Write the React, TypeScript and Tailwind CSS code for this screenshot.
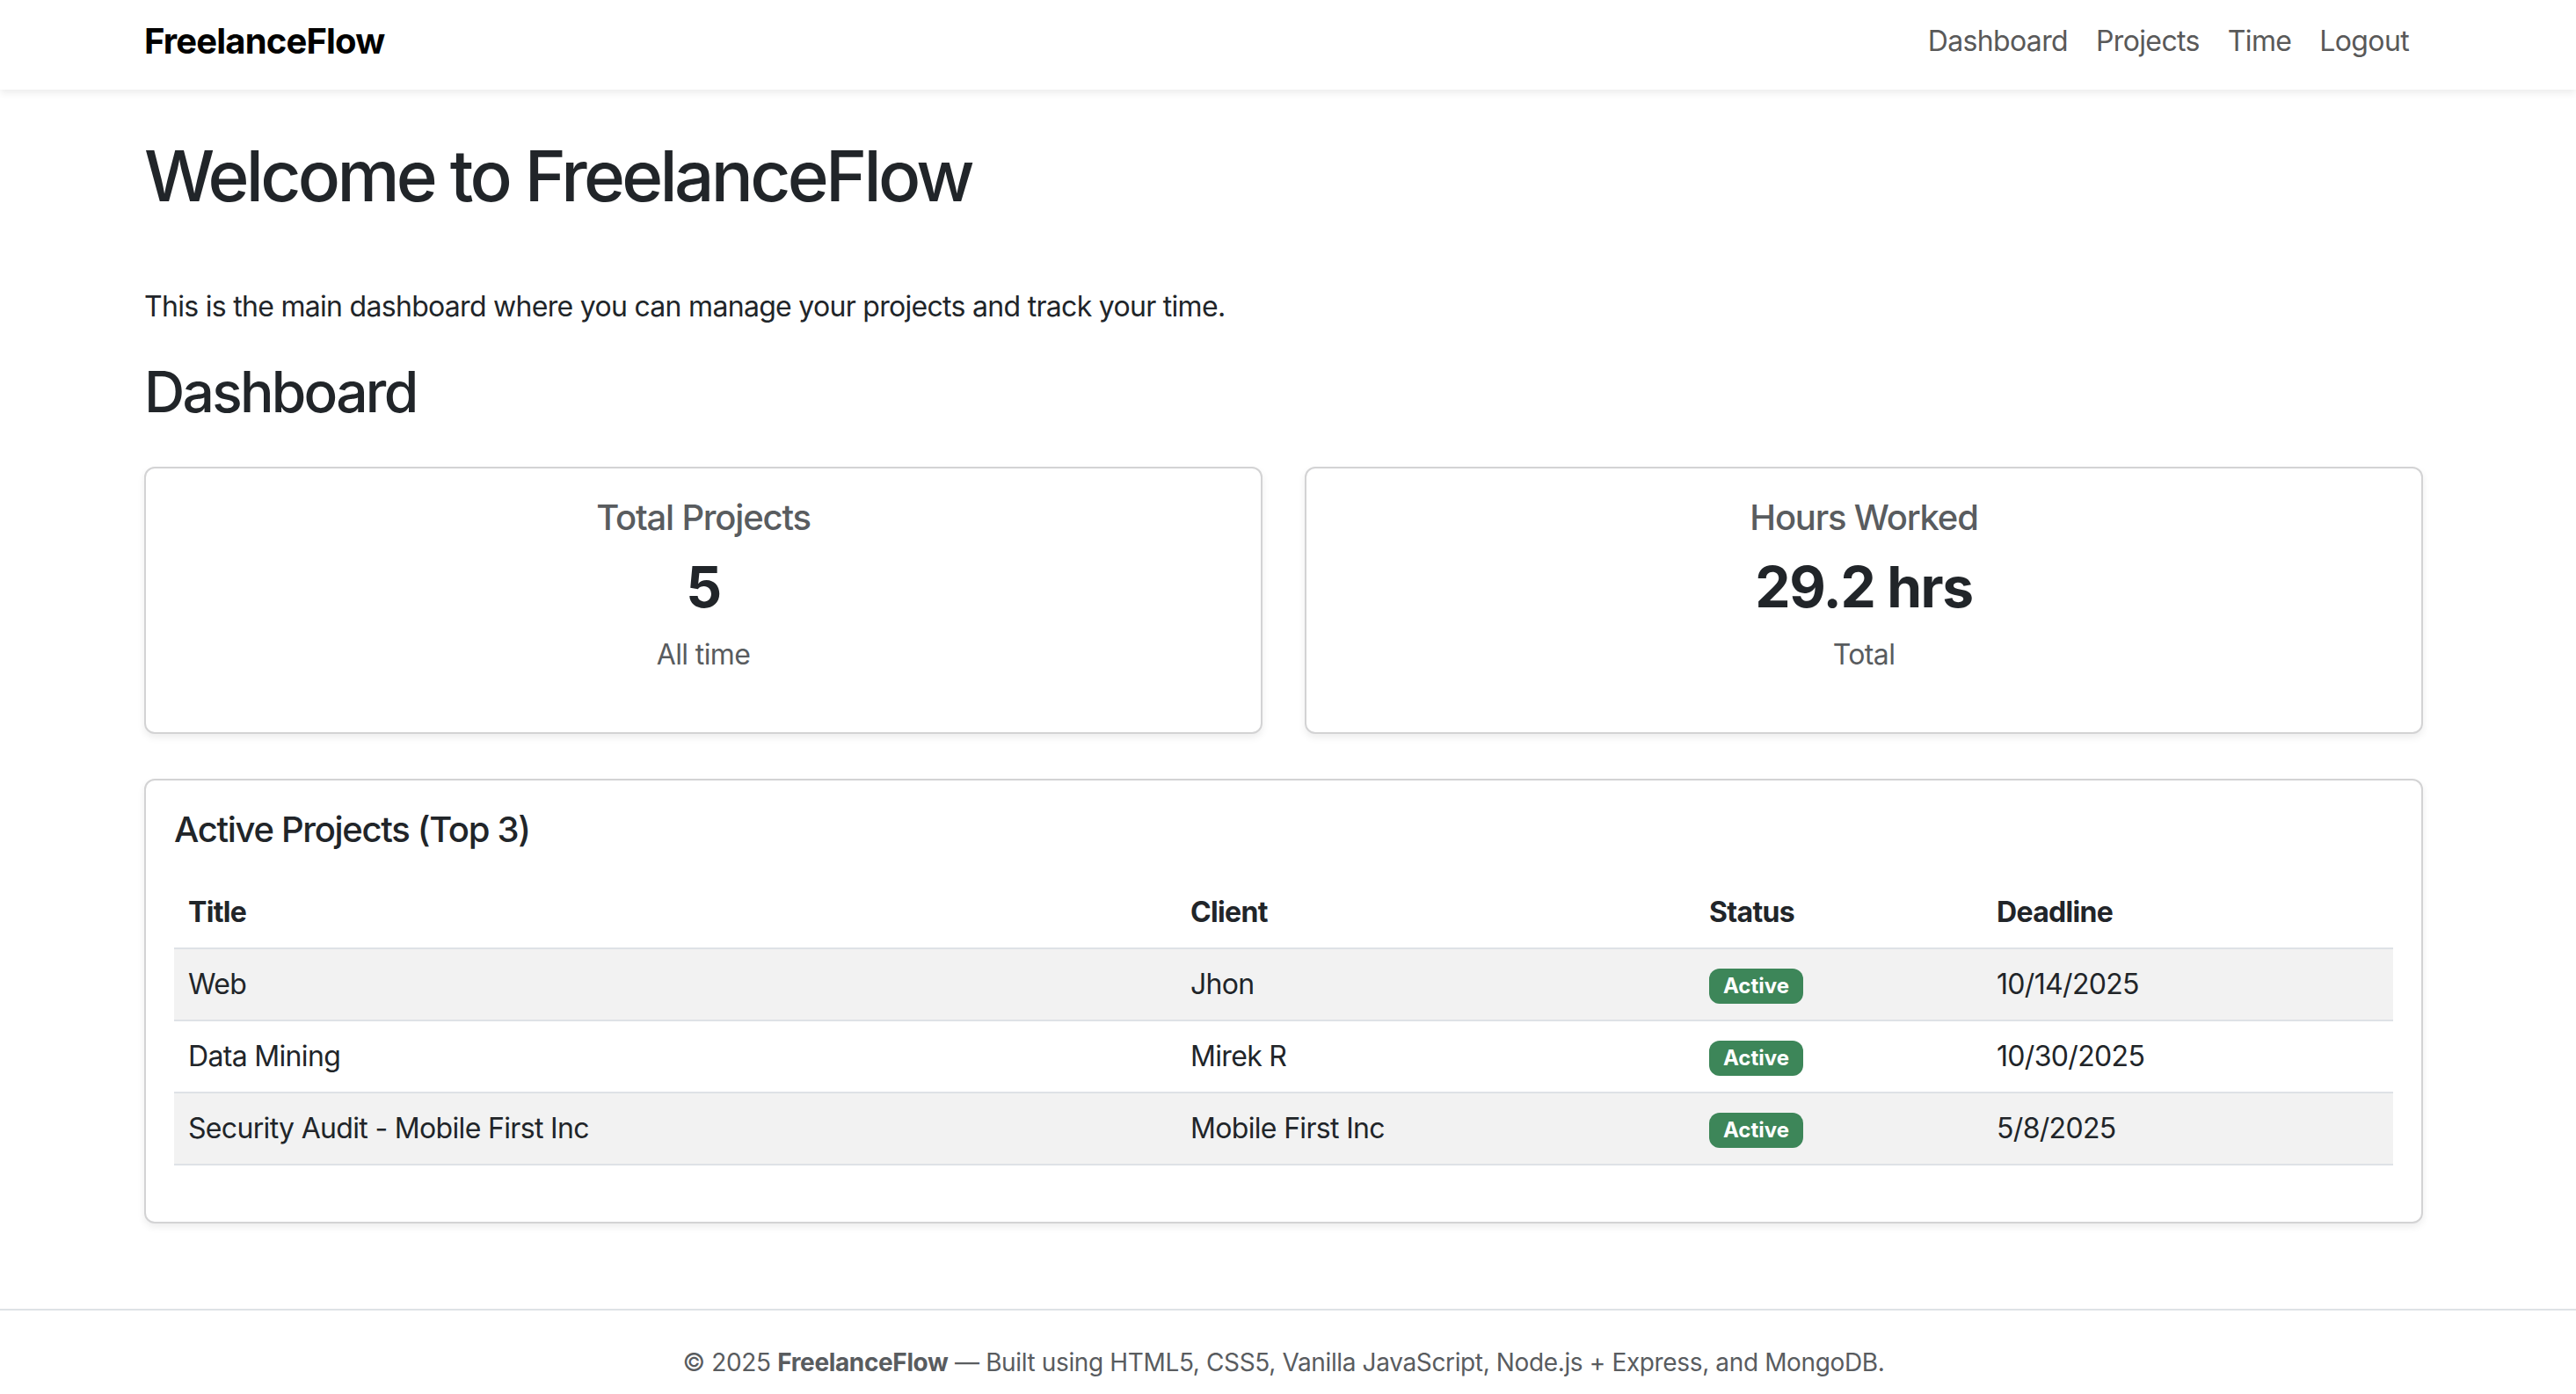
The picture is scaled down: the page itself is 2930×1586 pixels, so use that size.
const projects = [
	{title: "Web", client: "Jhon", status: "Active", deadline: "10/14/2025"},
	{title: "Data Mining", client: "Mirek R", status: "Active", deadline: "10/30/2025"},
	{title: "Security Audit - Mobile First Inc", client: "Mobile First Inc", status: "Active", deadline: "5/8/2025"},
];

function StatCard({title, value, sub}: {title: string; value: string; sub: string}) {
	return (
		<div className="border-2 border-[#d3d3d4] rounded-[12px] shadow-[0_4px_8px_rgba(0,0,0,0.075)] bg-white h-[304px] pt-[32px] flex flex-col items-center text-center">
			<h5 className="text-[40px] leading-[48px] font-medium tracking-[-0.03em] text-[#595c5f]">{title}</h5>
			<div className="mt-[16px] text-[64px] leading-[77px] font-bold tracking-[-0.022em] text-[#212529]">{value}</div>
			<p className="mt-[15px] text-[32px] leading-[48px] tracking-[-0.02em] text-[#595c5f]">{sub}</p>
		</div>
	);
}

export default function App() {
	return (
		<div className="min-h-screen bg-white text-[#212529] font-['Inter','Noto_Sans',sans-serif]">
			<nav className="bg-white h-[102px] shadow-[0_4px_8px_rgba(0,0,0,0.075)] relative">
				<div className="w-[2920px] h-full">
					<div className="mx-auto w-[2592px] h-full pb-[8px] flex items-center justify-between">
						<span className="text-[40px] font-bold text-black leading-[60px] tracking-[-0.021em]">FreelanceFlow</span>
						<ul className="flex items-center text-[32px] text-[#595959] leading-[48px] tracking-[-0.02em]">
							{["Dashboard", "Projects", "Time", "Logout"].map((l) => (
								<li key={l} className="px-[16px]">{l}</li>
							))}
						</ul>
					</div>
				</div>
			</nav>

			<div className="w-[2920px]">
				<main className="mx-auto w-[2592px] pt-[50px]">
					<h1 className="text-[80px] leading-[96px] font-medium tracking-[-0.046em]">Welcome to FreelanceFlow</h1>
					<p className="mt-[77px] text-[32px] leading-[48px] tracking-[-0.022em]">
						This is the main dashboard where you can manage your projects and track your time.
					</p>
					<h2 className="mt-[34px] text-[64px] leading-[77px] font-medium tracking-[-0.042em]">Dashboard</h2>

					<div className="mt-[47px] grid grid-cols-2 gap-[48px]">
						<StatCard title="Total Projects" value="5" sub="All time" />
						<StatCard title="Hours Worked" value="29.2 hrs" sub="Total" />
					</div>

					<section className="mt-[51px] border-2 border-[#d3d3d4] rounded-[12px] shadow-[0_4px_8px_rgba(0,0,0,0.075)] bg-white px-[32px] pt-[32px] pb-[64px]">
						<h5 className="text-[40px] leading-[48px] font-medium tracking-[-0.033em]">Active Projects (Top 3)</h5>
						<table className="mt-[30px] w-full text-[32px] leading-[48px] tracking-[-0.021em] border-collapse text-left">
							<thead>
								<tr className="border-b-2 border-[#dee2e6]">
									<th className="w-[1140px] px-[16px] py-[16px] font-bold">Title</th>
									<th className="w-[590px] px-[16px] py-[16px] font-bold">Client</th>
									<th className="w-[327px] px-[16px] py-[16px] font-bold">Status</th>
									<th className="px-[16px] py-[16px] font-bold">Deadline</th>
								</tr>
							</thead>
							<tbody>
								{projects.map((p, i) => (
									<tr key={p.title} className={`border-b-2 border-[#dee2e6] ${i % 2 === 0 ? "bg-[#f2f2f2]" : "bg-white"}`}>
										<td className="px-[16px] py-[16px]">{p.title}</td>
										<td className="px-[16px] py-[16px]">{p.client}</td>
										<td className="px-[16px] py-[16px]">
											<span className="inline-block bg-[#3d8659] text-white text-[24px] leading-[24px] font-bold tracking-normal px-[16px] py-[8px] rounded-[12px] align-middle">
												{p.status}
											</span>
										</td>
										<td className="px-[16px] py-[16px]">{p.deadline}</td>
									</tr>
								))}
							</tbody>
						</table>
					</section>
				</main>
			</div>

			<footer className="mt-[97px] border-t-2 border-[#dee2e6]">
				<div className="w-[2920px] pt-[38px] pb-[38px] text-center text-[28px] leading-[42px] tracking-[-0.013em] text-[#595c5f]">
					© 2025 <strong className="font-bold">FreelanceFlow</strong> — Built using HTML5, CSS5, Vanilla JavaScript, Node.js + Express, and MongoDB.
				</div>
			</footer>
		</div>
	);
}
